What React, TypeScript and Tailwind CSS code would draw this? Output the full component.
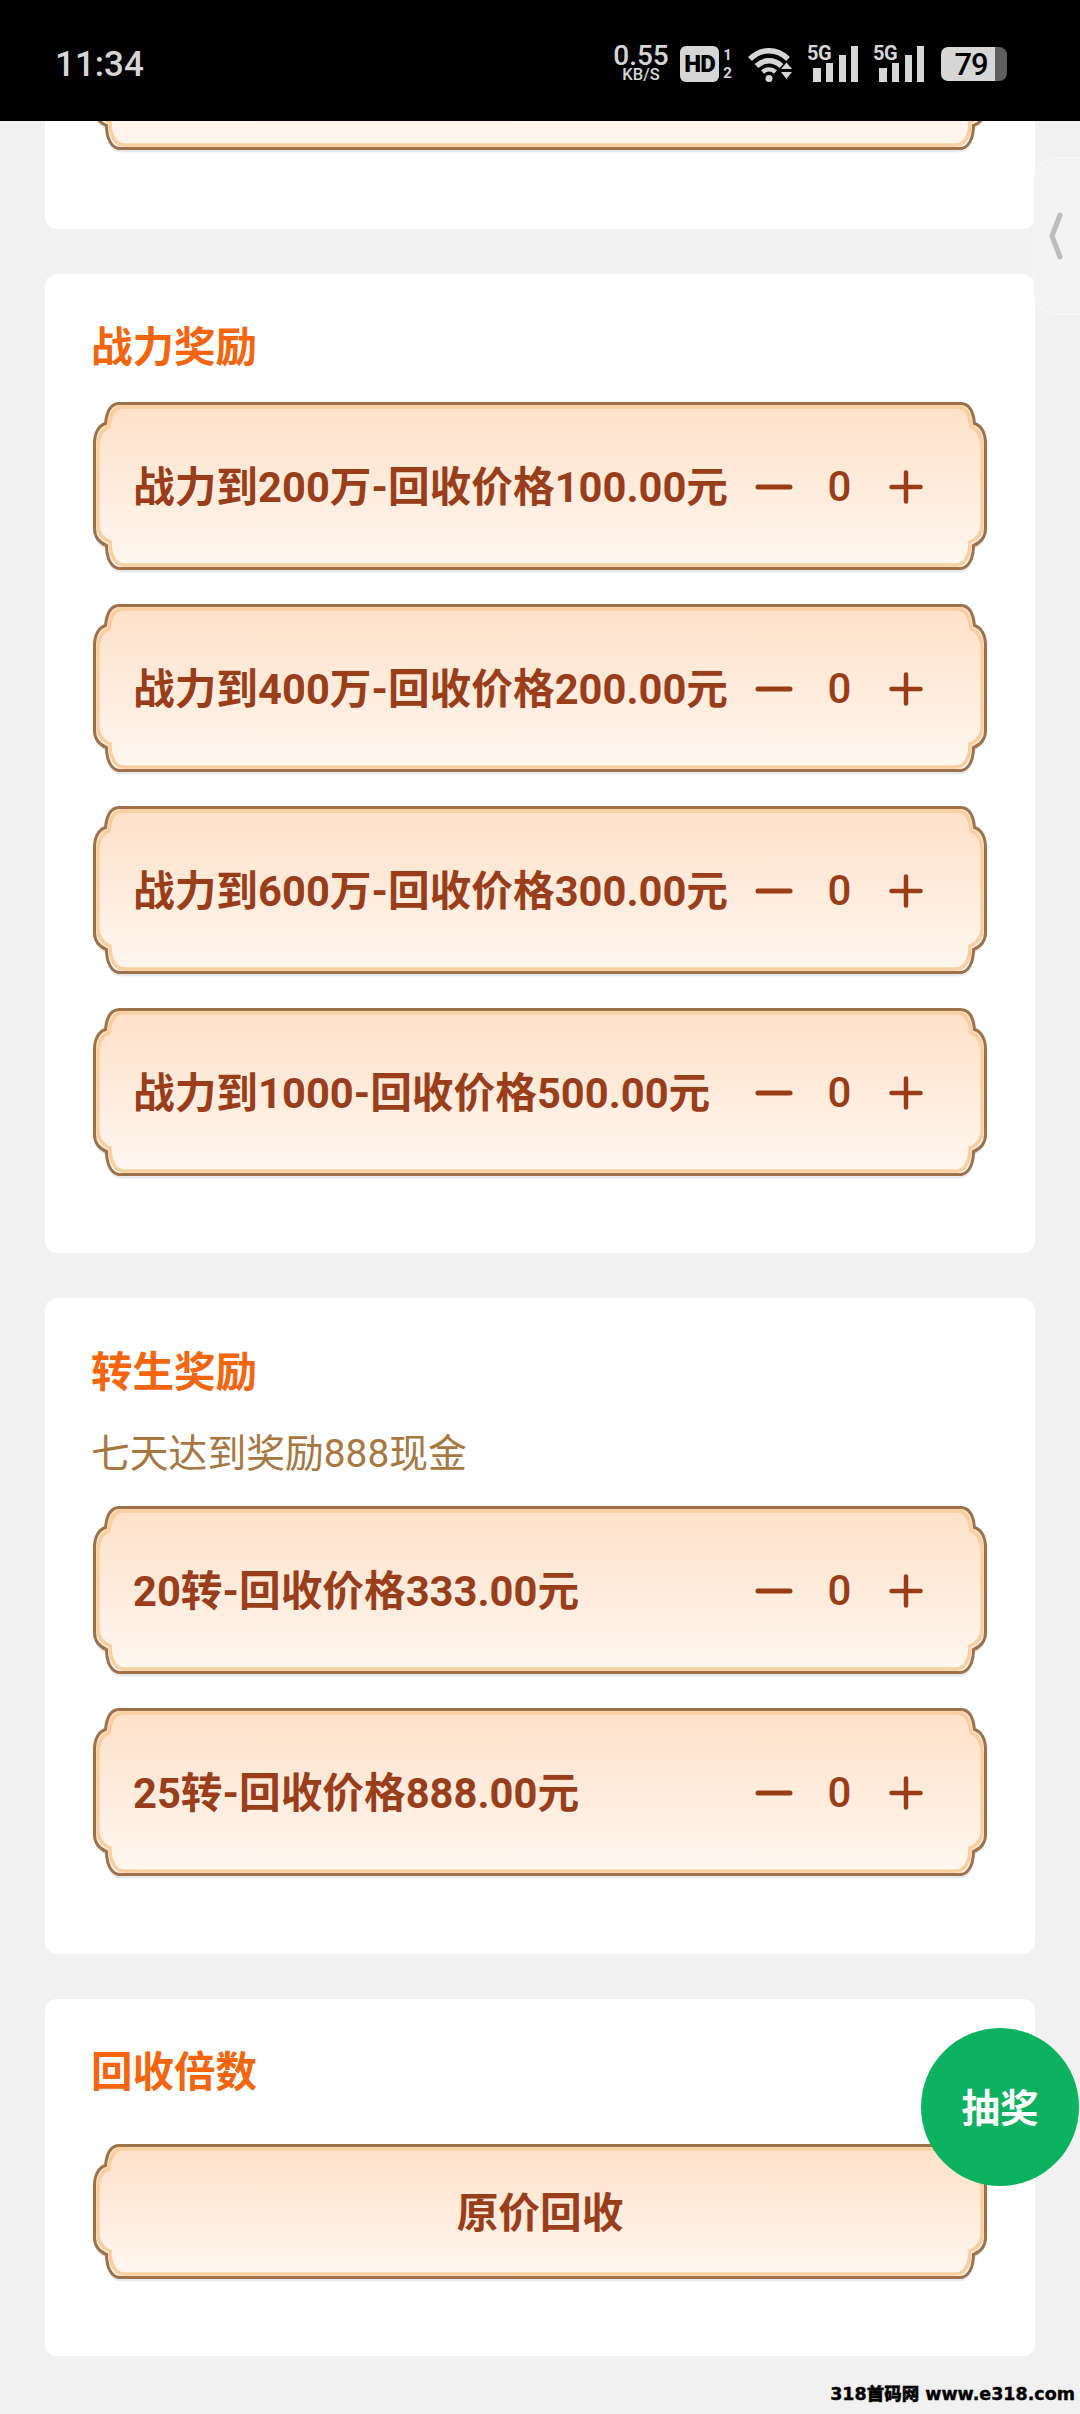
import React from "react";

// Scalloped plaque outline for a box inset by `i` on every side.
function plaquePath(w: number, h: number, i: number) {
  const l = i, t = i, r = w - i, b = h - i;
  return [
    `M${l + 25} ${t}`,
    `H${r - 25}`,
    `C${r - 16} ${t} ${r - 12} ${t + 9} ${r - 11} ${t + 20}`,
    `C${r - 4} ${t + 22} ${r} ${t + 30} ${r} ${t + 40}`,
    `V${b - 40}`,
    `C${r} ${b - 32} ${r - 5} ${b - 26} ${r - 12} ${b - 23}`,
    `C${r - 12} ${b - 10} ${r - 17} ${b} ${r - 26} ${b}`,
    `H${l + 26}`,
    `C${l + 17} ${b} ${l + 12} ${b - 10} ${l + 12} ${b - 23}`,
    `C${l + 5} ${b - 26} ${l} ${b - 32} ${l} ${b - 40}`,
    `V${t + 40}`,
    `C${l} ${t + 30} ${l + 4} ${t + 22} ${l + 11} ${t + 20}`,
    `C${l + 12} ${t + 9} ${l + 16} ${t} ${l + 25} ${t}`,
    "Z",
  ].join(" ");
}

function PlaqueFrame({ id, w, h }: { id: string; w: number; h: number }) {
  return (
    <svg className="absolute left-0 top-0" width={w} height={h + 8} viewBox={`0 0 ${w} ${h + 8}`}>
      <defs>
        <linearGradient id={id} x1="0" y1="0" x2="0" y2="1">
          <stop offset="0" stopColor="#fee0c8" />
          <stop offset="1" stopColor="#fff7f0" />
        </linearGradient>
      </defs>
      <path d={plaquePath(w, h, 1.5)} transform="translate(0 4)" fill="#d5dbe3" opacity="0.6" />
      <path d={plaquePath(w, h, 1.5)} transform="translate(0 1.5)" fill="#9c6d44" />
      <path d={plaquePath(w, h, 1.5)} fill={`url(#${id})`} stroke="#9f7149" strokeWidth="3" />
      <path d={plaquePath(w, h, 5)} fill="none" stroke="#f9cfa2" strokeWidth="3.500" />
    </svg>
  );
}

function Stepper() {
  return (
    <div className="relative flex w-[168px] items-center justify-between">
      <svg width="38" height="6" viewBox="0 0 38 6">
        <line x1="3" y1="3" x2="35" y2="3" stroke="#9a3d17" strokeWidth="5" strokeLinecap="round" />
      </svg>
      <span className="ml-[-3px] text-[42px] font-medium leading-none text-[#9a3d17]">0</span>
      <svg width="34" height="34" viewBox="0 0 34 34">
        <path d="M2.5 17H31.5M17 2.5V31.5" stroke="#9a3d17" strokeWidth="4.500" strokeLinecap="round" />
      </svg>
    </div>
  );
}

function RewardRow({ id, label }: { id: string; label: string }) {
  return (
    <div className="relative flex h-[168px] w-[894px] items-center justify-between pl-[40px] pr-[64px] pt-[2px]">
      <PlaqueFrame id={id} w={894} h={168} />
      <span className="relative pt-[2px] text-[41.700px] font-bold leading-none text-[#9a3d1b]">{label}</span>
      <Stepper />
    </div>
  );
}

function SectionTitle({ children }: { children: React.ReactNode }) {
  return <h2 className="h-[60px] text-[41.500px] font-bold leading-[60px] text-[#f4650e]">{children}</h2>;
}

function SignalBars() {
  return (
    <div className="relative h-[36px] w-[51px]">
      <span className="absolute left-0 top-0 text-[20px] font-bold leading-[15px] tracking-[-0.5px] text-[#d6d6d6]">5G</span>
      <svg className="absolute left-0 top-0" width="51" height="36" viewBox="0 0 51 36">
        <rect x="6" y="22" width="8" height="14" fill="#d6d6d6" />
        <rect x="19" y="17" width="7" height="19" fill="#d6d6d6" />
        <rect x="32" y="9" width="7" height="27" fill="#d6d6d6" />
        <rect x="44" y="0" width="7" height="36" fill="#d6d6d6" />
      </svg>
    </div>
  );
}

function StatusBar() {
  return (
    <header className="relative z-10 flex h-[121px] items-center justify-between bg-black pl-[55px] pr-[73px] pt-[7px] text-[#d6d6d6]">
      <span className="text-[35px] font-medium leading-none">11:34</span>
      <div className="flex items-center">
        <div className="flex w-[56px] flex-col items-center">
          <span className="text-[28px] font-medium leading-[22px]">0.55</span>
          <span className="text-[16.500px] font-medium leading-[16px]">KB/S</span>
        </div>
        <div className="ml-[11px] flex h-[36px] w-[39px] items-center justify-center rounded-[6px] bg-[#d6d6d6] text-[24px] font-black leading-none tracking-[-1px] text-black">
          HD
        </div>
        <div className="ml-[4px] flex w-[9px] flex-col items-center text-[15px] font-bold leading-[18px]">
          <span>1</span>
          <span>2</span>
        </div>
        <svg className="ml-[15px]" width="46" height="36" viewBox="0 0 46 36" fill="none">
          <path d="M3 13C14 2 30 2 41 13" stroke="#d6d6d6" strokeWidth="5.500" />
          <path d="M9.500 20C17 13 27 13 34.500 20" stroke="#d6d6d6" strokeWidth="5.500" />
          <path d="M15.500 26C19.500 22.500 24.500 22.500 28.500 26" stroke="#d6d6d6" strokeWidth="4.500" />
          <circle cx="22" cy="32.500" r="3.500" fill="#d6d6d6" />
          <path d="M34 23L39.500 16.500L45 23ZM34 26L39.500 33L45 26Z" fill="#d6d6d6" />
        </svg>
        <div className="ml-[14px]">
          <SignalBars />
        </div>
        <div className="ml-[15px]">
          <SignalBars />
        </div>
        <div className="relative ml-[17px] flex h-[34px] w-[66px] items-center">
          <div className="absolute right-0 top-0 h-full w-[14px] rounded-r-[8px] bg-[#5e5e5e]" />
          <div className="absolute left-0 top-0 flex h-full w-[54px] items-center justify-center rounded-l-[7px] bg-[#d6d6d6] pl-[6px] text-[31px] font-medium leading-none tracking-[-1px] text-black">
            79
          </div>
        </div>
      </div>
    </header>
  );
}

export default function App() {
  return (
    <div className="relative h-[2414px] w-[1080px] overflow-hidden bg-[#f1f1f1] font-['Roboto','Noto_Sans_CJK_SC',sans-serif]">
      <StatusBar />

      <main className="flex flex-col gap-[45px] pl-[45px] pr-[45px]">
        <section className="h-[108px] overflow-hidden rounded-b-[12px] bg-white pl-[48px]">
          <div className="relative mt-[-139px] h-[168px] w-[894px]">
            <PlaqueFrame id="p0" w={894} h={168} />
          </div>
        </section>

        <section className="flex h-[979px] flex-col rounded-[12px] bg-white pl-[46px] pt-[44px]">
          <SectionTitle>战力奖励</SectionTitle>
          <div className="ml-[2px] mt-[24px] flex flex-col gap-[34px]">
            <RewardRow id="p1" label="战力到200万-回收价格100.00元" />
            <RewardRow id="p2" label="战力到400万-回收价格200.00元" />
            <RewardRow id="p3" label="战力到600万-回收价格300.00元" />
            <RewardRow id="p4" label="战力到1000-回收价格500.00元" />
          </div>
        </section>

        <section className="flex h-[656px] flex-col rounded-[12px] bg-white pl-[46px] pt-[45px]">
          <SectionTitle>转生奖励</SectionTitle>
          <p className="mt-[29px] h-[44px] text-[38.800px] leading-[44px] text-[#a8763f]">七天达到奖励888现金</p>
          <div className="ml-[2px] mt-[30px] flex flex-col gap-[34px]">
            <RewardRow id="p5" label="20转-回收价格333.00元" />
            <RewardRow id="p6" label="25转-回收价格888.00元" />
          </div>
        </section>

        <section className="flex h-[357px] flex-col rounded-[12px] bg-white pl-[46px] pt-[44px]">
          <SectionTitle>回收倍数</SectionTitle>
          <div className="relative ml-[2px] mt-[41px] flex h-[135px] w-[894px] items-center justify-center pt-[5px]">
            <PlaqueFrame id="p7" w={894} h={135} />
            <span className="relative text-[41.700px] font-bold leading-none text-[#9a3d1b]">原价回收</span>
          </div>
        </section>
      </main>

      {/* Edge handle */}
      <div className="absolute right-0 top-[157px] flex h-[158px] w-[47px] items-center rounded-l-[24px] border border-r-0 border-[#f8f8f8] bg-[#f3f3f3] pl-[15px]">
        <svg width="14" height="48" viewBox="0 0 14 48">
          <path d="M11 3L3 24L11 45" fill="none" stroke="#bcbcbc" strokeWidth="5" strokeLinecap="round" strokeLinejoin="round" />
        </svg>
      </div>

      {/* Floating draw button */}
      <button className="absolute left-[921px] top-[2028px] flex h-[158px] w-[158px] items-center justify-center rounded-full bg-[#0cb260] pt-[3px] text-[38.500px] font-bold text-white">
        抽奖
      </button>

      {/* Site stamp */}
      <div className="absolute bottom-[7px] right-[5px] font-['DejaVu_Sans','Noto_Sans_CJK_SC',sans-serif] text-[17.500px] font-black leading-[26px] text-black [-webkit-text-stroke:0.4px_black]">
        318首码网 www.e318.com
      </div>
    </div>
  );
}
